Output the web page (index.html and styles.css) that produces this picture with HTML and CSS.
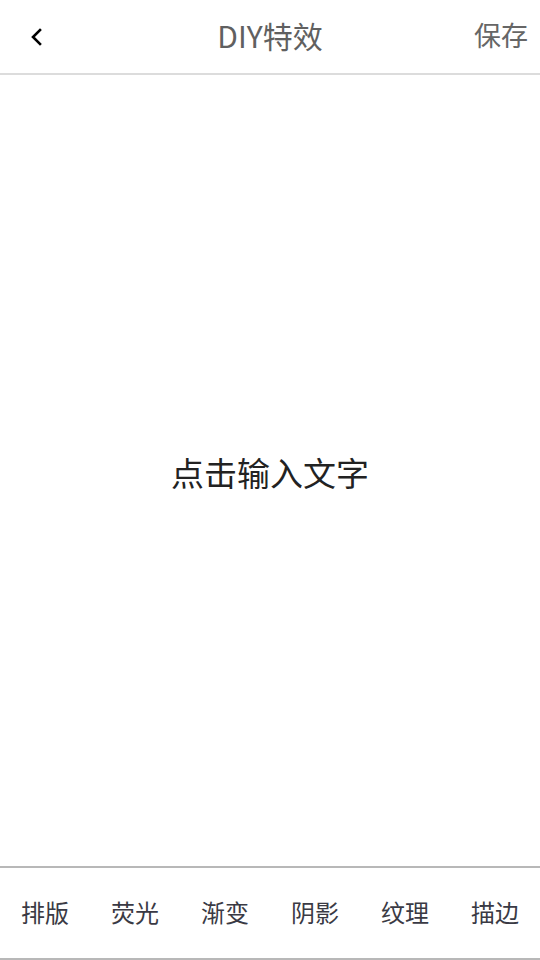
FILE: index.html
```html
<!DOCTYPE html>
<html lang="zh-CN">
<head>
<meta charset="utf-8">
<title>DIY特效</title>
<link rel="stylesheet" href="styles.css">
</head>
<body>
<div class="app">
  <header class="header">
    <div class="back">
      <svg width="14" height="20" viewBox="0 0 14 20"><path d="M10 3 L3 10 L10 17" fill="none" stroke="#000" stroke-width="2.6" stroke-linecap="square" stroke-linejoin="miter"/></svg>
    </div>
    <div class="title">DIY特效</div>
    <div class="save">保存</div>
  </header>
  <main class="canvas">
    <div class="placeholder">点击输入文字</div>
  </main>
  <nav class="tabs">
    <div class="tab">排版</div>
    <div class="tab">荧光</div>
    <div class="tab">渐变</div>
    <div class="tab">阴影</div>
    <div class="tab">纹理</div>
    <div class="tab">描边</div>
  </nav>
</div>
</body>
</html>
```
FILE: styles.css
```css
html, body {
  margin: 0;
  padding: 0;
  background: #fff;
}
body {
  font-family: "Noto Sans CJK SC", "Noto Sans", sans-serif;
}
.app {
  width: 540px;
  height: 960px;
  display: flex;
  flex-direction: column;
}
.header {
  height: 73px;
  border-bottom: 2px solid #dcdcdc;
  display: grid;
  grid-template-columns: 1fr auto 1fr;
  align-items: center;
}
.back {
  padding-left: 30px;
  display: flex;
  align-items: center;
  height: 73px;
}
.title {
  font-size: 30px;
  color: #606060;
  line-height: 1;
  padding-bottom: 4px;
}
.save {
  justify-self: end;
  padding-right: 12px;
  padding-bottom: 4px;
  font-size: 27px;
  color: #666;
  line-height: 1;
}
.canvas {
  flex: 1;
  display: flex;
  align-items: center;
  justify-content: center;
}
.placeholder {
  font-size: 33px;
  color: #222;
  line-height: 1;
  padding-top: 4px;
}
.tabs {
  height: 90px;
  border-top: 2px solid #b8b8b8;
  border-bottom: 2px solid #b8b8b8;
  display: grid;
  grid-template-columns: repeat(6, 1fr);
  align-items: center;
}
.tab {
  text-align: center;
  font-size: 24px;
  color: #3a3a44;
  line-height: 1;
  padding-bottom: 2px;
}
```
